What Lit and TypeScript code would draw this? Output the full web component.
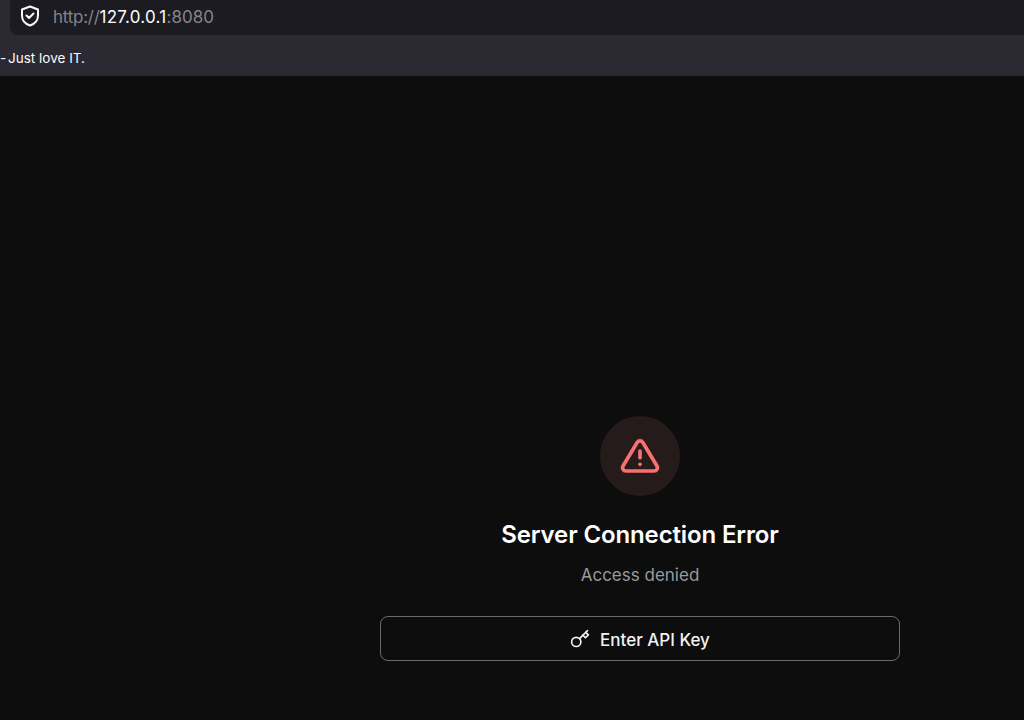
import {css, html, LitElement} from 'lit';
import {customElement} from 'lit/decorators.js';

@customElement('app-root')
export class AppRoot extends LitElement {
  render() {
    return html`
      <header class="chrome">
        <div class="url-row">
          <div class="url-field">
            <svg class="shield" viewBox="0 0 24 24" fill="none" stroke="currentColor" stroke-width="2" stroke-linecap="round" stroke-linejoin="round">
              <path d="M12 2.500l8 3v6c0 5-3.400 8.500-8 10-4.600-1.500-8-5-8-10v-6z" />
              <path d="M8.500 11.500l2.500 2.500 4.500-4.500" />
            </svg>
            <span class="url"><span class="dim scheme">http://</span><span class="host">127.0.0.1</span><span class="dim">:8080</span></span>
          </div>
        </div>
        <div class="bookmarks"><span class="dash">-</span> Just love IT.</div>
      </header>
      <main class="main">
        <div class="panel">
          <div class="alert-circle">
            <svg class="alert" viewBox="0 0 24 24" fill="none" stroke="currentColor" stroke-width="2.200" stroke-linecap="round" stroke-linejoin="round">
              <path d="M10.290 3.860L1.820 18a2 2 0 0 0 1.710 3h16.940a2 2 0 0 0 1.710-3L13.710 3.860a2 2 0 0 0-3.420 0z" />
              <path d="M12 9v4" />
              <path d="M12 17h.01" />
            </svg>
          </div>
          <h1 class="title">Server Connection Error</h1>
          <p class="message">Access denied</p>
          <button class="key-button">
            <svg class="key" viewBox="0 0 24 24" fill="none" stroke="currentColor" stroke-width="2" stroke-linecap="round" stroke-linejoin="round">
              <circle cx="7.500" cy="15.500" r="5.500" />
              <path d="M11.500 11.500L21 2" />
              <path d="M15.500 7.500l3 3L22 7l-3-3" />
            </svg>
            <span class="key-label">Enter API Key</span>
          </button>
        </div>
      </main>
    `;
  }

  static styles = css`
    :host {
      display: block;
      height: 720px;
      overflow: hidden;
      background: #0d0d0d;
      font-family: Inter, 'Liberation Sans', sans-serif;
    }

    .chrome {
      background: #2b2a33;
      height: 76px;
    }

    .url-row {
      height: 47px;
      padding-left: 10px;
    }

    .url-field {
      display: flex;
      align-items: center;
      gap: 11px;
      height: 35px;
      padding: 0 0 4px 8px;
      box-sizing: border-box;
      background: #1c1b22;
      border-radius: 0 0 0 8px;
    }

    .shield {
      width: 24px;
      height: 24px;
      color: #fbfbfe;
    }

    .url {
      padding-top: 2px;
      font-size: 17px;
      letter-spacing: 0.05px;
    }

    .dim {
      color: #85848a;
    }

    .scheme {
      letter-spacing: -0.25px;
    }

    .host {
      color: #fbfbfe;
      letter-spacing: 0.25px;
    }

    .bookmarks {
      font-size: 13.500px;
      line-height: 22px;
      color: #fbfbfe;
    }

    .dash {
      margin-right: -2px;
    }

    .main {
      display: flex;
      justify-content: center;
      padding: 340px 0 0 256px;
    }

    .panel {
      display: flex;
      flex-direction: column;
      align-items: center;
      width: 520px;
    }

    .alert-circle {
      display: flex;
      align-items: center;
      justify-content: center;
      width: 80px;
      height: 80px;
      border-radius: 50%;
      background: #261b1b;
    }

    .alert {
      width: 40px;
      height: 40px;
      color: #f87171;
    }

    .title {
      margin: 25px 0 0;
      font-size: 24px;
      line-height: 28px;
      font-weight: 600;
      letter-spacing: -0.13px;
      color: #fff;
    }

    .message {
      margin: 14px 0 0;
      font-size: 17px;
      line-height: 24px;
      color: #9a9a9a;
    }

    .key-button {
      display: flex;
      align-items: center;
      justify-content: center;
      gap: 10px;
      width: 100%;
      height: 45px;
      margin-top: 29px;
      background: transparent;
      border: 1px solid #6a6a6a;
      border-radius: 8px;
      color: #f2f2f2;
      font: 500 17px Inter, 'Liberation Sans', sans-serif;
    }

    .key {
      width: 20px;
      height: 20px;
    }

    .key-label {
      padding-top: 2px;
    }
  `;
}
